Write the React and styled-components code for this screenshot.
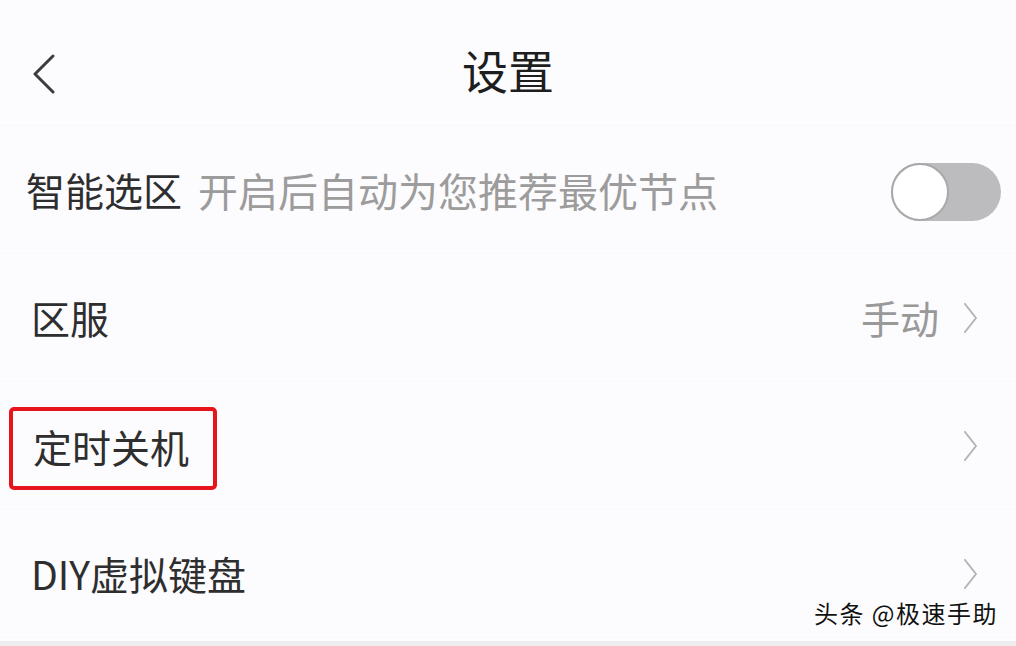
import React from 'react';
import styled, { createGlobalStyle } from 'styled-components';

//page reset
const GlobalStyle = createGlobalStyle`
    html, body {
        margin: 0;
        padding: 0;
        background: #fcfbfd;
    }
    #root {
        height: 646px;
    }
`;

const Page = styled.div`
    position: relative;
    width: 1016px;
    height: 646px;
    overflow: hidden;
    background: #fcfbfd;
    font-family: "Noto Sans CJK SC", "Noto Sans", sans-serif;
    color: #333;
`;

const Header = styled.header`
    position: relative;
    height: 126px;
    display: flex;
    align-items: center;
    justify-content: center;
    padding-top: 12px;
    box-sizing: border-box;
    border-bottom: 1px solid #f8f7fa;
`;

const BackButton = styled.button`
    position: absolute;
    left: 30px;
    top: 54px;
    width: 28px;
    height: 40px;
    padding: 0;
    border: none;
    background: none;
    display: flex;
    align-items: center;
    justify-content: center;
`;

const Title = styled.h1`
    margin: 0;
    font-size: 46px;
    font-weight: 400;
    color: #1e1e1e;
    line-height: 1;
`;

const List = styled.div`
    display: flex;
    flex-direction: column;
`;

const Row = styled.div`
    height: 128px;
    display: flex;
    align-items: center;
    padding: 0 ${(p) => (p.$toggle ? '15px' : '38px')} 0 ${(p) => (p.$toggle ? '26px' : '31px')};
    box-sizing: border-box;
    border-bottom: 1px solid #f9f8fb;
`;

const Label = styled.span`
    font-size: 39px;
    line-height: 1;
    color: #2e2e2e;
    white-space: nowrap;
`;

const Highlight = styled.span`
    display: inline-flex;
    align-items: center;
    margin: 6px 0 0 -22px;
    padding: 16px 24px 20px 20px;
    border: 4px solid #e8141c;
    border-radius: 5px;
`;

const Hint = styled.span`
    margin-left: 16px;
    font-size: 40px;
    line-height: 1;
    color: #9c9c9c;
    white-space: nowrap;
`;

const Spacer = styled.div`
    flex: 1;
`;

const Value = styled.span`
    font-size: 39px;
    line-height: 1;
    color: #999;
    margin-right: 24px;
`;

const Track = styled.div`
    width: 110px;
    height: 58px;
    margin-top: 5px;
    border-radius: 29px;
    background: #bcbcbe;
    display: flex;
    align-items: center;
`;

const Knob = styled.div`
    width: 54px;
    height: 54px;
    border-radius: 50%;
    background: #fff;
    border: 2px solid #a9a9ab;
    box-sizing: content-box;
`;

const Watermark = styled.div`
    position: absolute;
    right: 18px;
    bottom: 16px;
    font-size: 24px;
    color: #111;
    letter-spacing: 1.5px;
    text-shadow: 0 0 2px #fff, 0 0 2px #fff, 1px 1px 0 #fff, -1px -1px 0 #fff;
`;

const BottomEdge = styled.div`
    position: absolute;
    left: 0;
    right: 0;
    bottom: 0;
    height: 5px;
    background: #eeedf0;
`;

const Chevron = () => (
    <svg width="15" height="30" viewBox="0 0 15 30" fill="none">
        <polyline
            points="2,1 13,15 2,29"
            stroke="#b3b3ba"
            strokeWidth="2"
            strokeLinecap="round"
            strokeLinejoin="round"
        />
    </svg>
);

export default function App() {
    return (
        <>
            <GlobalStyle />
            <Page>
                <Header>
                    <BackButton aria-label="back">
                        <svg width="24" height="40" viewBox="0 0 24 40" fill="none">
                            <polyline
                                points="21,2 3,20 21,38"
                                stroke="#3c3c3c"
                                strokeWidth="3"
                                strokeLinecap="round"
                                strokeLinejoin="round"
                            />
                        </svg>
                    </BackButton>
                    <Title>设置</Title>
                </Header>
                <List>
                    <Row $toggle>
                        <Label>智能选区</Label>
                        <Hint>开启后自动为您推荐最优节点</Hint>
                        <Spacer />
                        <Track>
                            <Knob />
                        </Track>
                    </Row>
                    <Row>
                        <Label>区服</Label>
                        <Spacer />
                        <Value>手动</Value>
                        <Chevron />
                    </Row>
                    <Row>
                        <Highlight>
                            <Label>定时关机</Label>
                        </Highlight>
                        <Spacer />
                        <Chevron />
                    </Row>
                    <Row>
                        <Label>DIY虚拟键盘</Label>
                        <Spacer />
                        <Chevron />
                    </Row>
                </List>
                <Watermark>头条 @极速手助</Watermark>
                <BottomEdge />
            </Page>
        </>
    );
}
